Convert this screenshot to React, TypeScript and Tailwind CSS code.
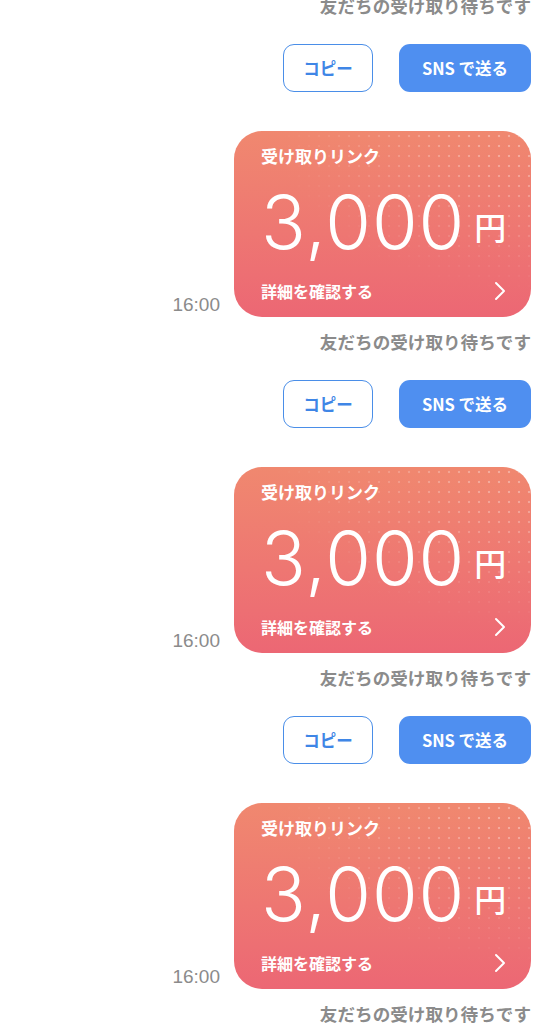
import React from 'react'

const jp = "font-['Noto_Sans_CJK_JP','Noto_Sans',sans-serif]"

function Status() {
  return (
    <p className={`${jp} pr-[25px] text-right text-[17.6px] font-bold leading-[22px] text-[#8b8b8b]`}>
      友だちの受け取り待ちです
    </p>
  )
}

function Actions() {
  return (
    <div className={`${jp} flex justify-end gap-[26px] pr-[25px]`}>
      <button className="h-[48px] w-[90px] rounded-[11px] border-[1.5px] border-[#4a8ee8] bg-white text-[16.5px] font-bold text-[#3f86e6]">
        コピー
      </button>
      <button className="h-[48px] w-[132px] rounded-[11px] bg-[#4f8ff0] text-[16.5px] font-bold text-white">
        SNS で送る
      </button>
    </div>
  )
}

function LinkCard() {
  return (
    <div className="flex items-end justify-end gap-[14px] pr-[25px]">
      <span className="font-['Liberation_Sans',sans-serif] text-[19px] leading-[24px] text-[#8b8b8b]">16:00</span>
      <div className="relative h-[186px] w-[297px] overflow-hidden rounded-[28px] bg-gradient-to-b from-[#f0886f] to-[#ec6774]">
        <div className="pointer-events-none absolute inset-0 bg-[radial-gradient(circle,rgba(255,255,255,0.32)_1.2px,transparent_1.6px)] bg-[length:10px_10px] [mask-image:radial-gradient(ellipse_at_top_right,black_10%,transparent_62%)]" />
        <div className="relative flex h-full flex-col pl-[27px] pr-[26px]">
          <p className={`${jp} pt-[13px] text-[17px] font-bold leading-[24px] text-white`}>受け取りリンク</p>
          <div className="mt-[14px] flex items-center">
            <span className="font-['Inter',sans-serif] text-[74px] font-light leading-[80px] tracking-[1px] text-white">3,000</span>
            <span className={`${jp} ml-[9px] mt-[8px] text-[32px] font-medium leading-[40px] text-white`}>円</span>
          </div>
          <div className="mt-auto mb-[14px] flex items-center justify-between">
            <span className={`${jp} text-[16px] font-bold leading-[24px] text-white`}>詳細を確認する</span>
            <svg width="14" height="20" viewBox="0 0 14 20" fill="none" className="mr-[-2px]">
              <polyline points="3,2 11,10 3,18" stroke="white" strokeWidth="2" strokeLinecap="round" strokeLinejoin="round" />
            </svg>
          </div>
        </div>
      </div>
    </div>
  )
}

export default function App() {
  return (
    <div className="h-[1027px] overflow-hidden bg-white">
      <div className="-mt-[5px] flex flex-col">
        {[0, 1, 2].map((i) => (
          <div key={i} className="flex flex-col">
            <Status />
            <div className="mt-[27px]">
              <Actions />
            </div>
            <div className="mt-[39px] mb-[14px]">
              <LinkCard />
            </div>
          </div>
        ))}
        <Status />
      </div>
    </div>
  )
}
